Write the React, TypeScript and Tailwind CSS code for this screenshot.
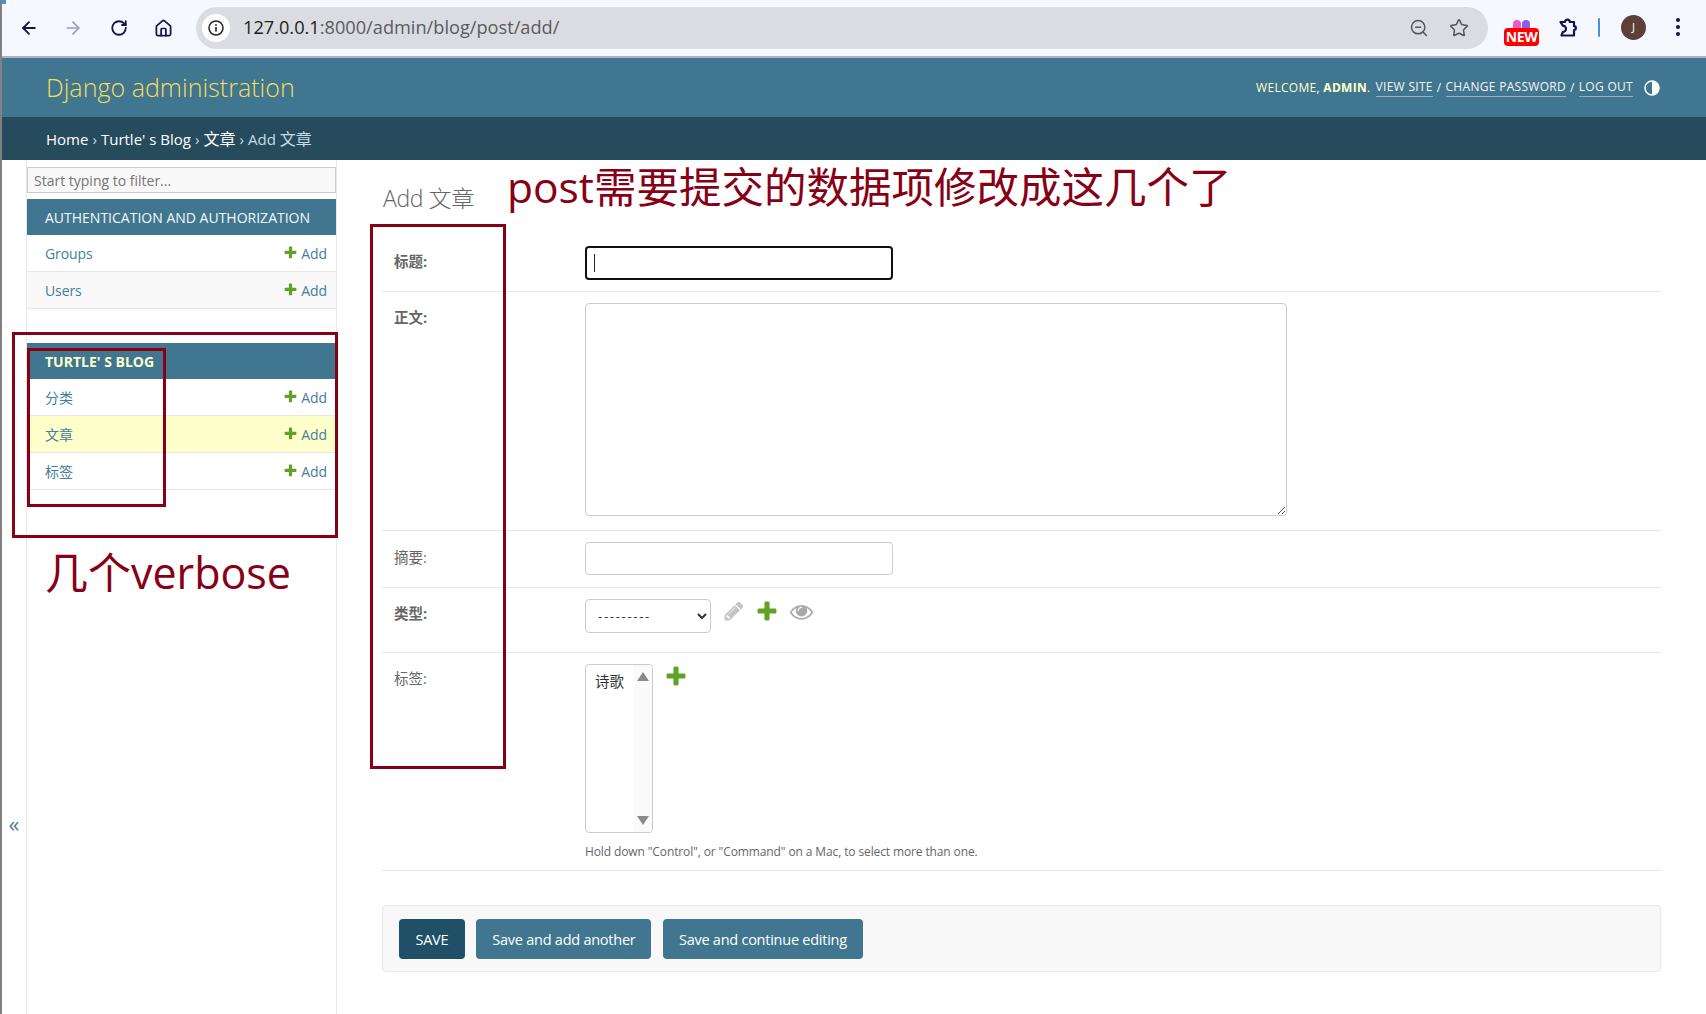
import React from "react";
import { ArrowLeft, ArrowRight, RotateCw, Home, ZoomOut, Star } from "lucide-react";

const FONT = "font-['Open_Sans','Noto_Sans_CJK_SC',sans-serif]";
const PLUS = "M1600 796v192q0 40-28 68t-68 28h-416v416q0 40-28 68t-68 28h-192q-40 0-68-28t-28-68v-416h-416q-40 0-68-28t-28-68v-192q0-40 28-68t68-28h416v-416q0-40 28-68t68-28h192q40 0 68 28t28 68v416h416q40 0 68 28t28 68z";
const PENCIL = "M491 1536l91-91-235-235-91 91v107h128v128h107zm523-928q0-22-22-22-10 0-17 7l-542 542q-7 7-7 17 0 22 22 22 10 0 17-7l542-542q7-7 7-17zm-54-192l416 416-832 832h-416v-416zm683 96q0 53-37 90l-166 166-416-416 166-165q36-38 90-38 53 0 91 38l235 234q37 39 37 91z";
const EYE = "M1664 960q-152-236-381-353 61 104 61 225 0 185-131.5 316.5t-316.5 131.5-316.5-131.5-131.5-316.5q0-121 61-225-229 117-381 353 133 205 333.5 326.5t434.5 121.5 434.5-121.5 333.5-326.5zm-720-384q0-20-14-34t-34-14q-125 0-214.5 89.5t-89.5 214.5q0 20 14 34t34 14 34-14 14-34q0-86 61-147t147-61q20 0 34-14t14-34zm848 384q0 34-20 69-140 230-376.5 368.5t-499.5 138.5-499.5-139-376.5-368q-20-35-20-69t20-69q140-229 376.5-368t499.5-139 499.5 139 376.5 368q20 35 20 69z";

function Fa({ d, size, color }: { d: string; size: number; color: string }) {
  return (
    <svg width={size} height={size} viewBox="0 0 1792 1792" className="shrink-0">
      <path d={d} fill={color} />
    </svg>
  );
}

function ModelRow({ name, tone }: { name: string; tone: string }) {
  return (
    <div className={`flex h-[37px] items-center justify-between border-b border-[#e8e8e8] pl-[18px] pr-[9px] pt-[1px] ${tone}`}>
      <span className="text-[14px] tracking-[-0.1px] text-[#447e9b]">{name}</span>
      <span className="flex items-center text-[14px] tracking-[-0.1px] text-[#447e9b]">
        <span className="-mt-[3px] mr-[3px]"><Fa d={PLUS} size={15} color="#5fa225" /></span>Add
      </span>
    </div>
  );
}

function Caption({ children, current }: { children: React.ReactNode; current?: boolean }) {
  return (
    <div className={`flex h-[36px] items-center bg-[#417690] pl-[18px] pt-[1px] text-[14px] uppercase ${current ? "font-bold text-[#ffffcc]" : "text-[#f7f7f7]"}`}>
      {children}
    </div>
  );
}

function Label({ children, bold, mt }: { children: React.ReactNode; bold?: boolean; mt: string }) {
  return <div className={`w-[203px] shrink-0 pl-[12px] text-[14.5px] leading-[20px] text-[#666] ${mt} ${bold ? "font-bold" : ""}`}>{children}</div>;
}

function Toolbar() {
  return (
    <div className="flex h-[58px] shrink-0 items-center border-b-2 border-[#aeaec4] bg-[#f6f8ff] text-[#17124f]">
      <div className="flex w-[194px] shrink-0 items-center">
        <ArrowLeft size={20} strokeWidth={2.2} className="ml-[17px]" />
        <ArrowRight size={20} strokeWidth={2} className="ml-[24px] text-[#9b9ab8]" />
        <RotateCw size={18} strokeWidth={2.4} className="ml-[27px]" />
        <Home size={19} strokeWidth={2.2} className="ml-[26px]" />
      </div>
      <div className="flex h-[42px] w-[1292px] shrink-0 items-center rounded-full bg-[#dbdce1] pl-[6px] pr-[19px]">
        <div className="flex h-[28px] w-[28px] items-center justify-center rounded-full bg-white">
          <svg width="16" height="16" viewBox="0 0 16 16"><circle cx="8" cy="8" r="7" fill="none" stroke="#222" strokeWidth="1.5" /><rect x="7.2" y="7" width="1.6" height="4.6" fill="#222" /><rect x="7.2" y="4.2" width="1.6" height="1.6" fill="#222" /></svg>
        </div>
        <span className="ml-[13px] text-[18.2px] text-[#222]">127.0.0.1<span className="text-[#5a5a5f]">:8000/admin/blog/post/add/</span></span>
        <div className="ml-auto flex items-center gap-[20px] text-[#55565b]">
          <ZoomOut size={20} strokeWidth={1.8} />
          <Star size={20} strokeWidth={1.8} />
        </div>
      </div>
      <div className="ml-[16px] mt-[9px] flex h-[27px] w-[35px] shrink-0 flex-col items-center">
        <div className="flex h-[9px] items-end gap-[1px]">
          <div className="h-[8px] w-[8px] rounded-t-[4px] bg-[#e85bc8]" />
          <div className="h-[8px] w-[8px] rounded-t-[4px] bg-[#8a5cf0]" />
        </div>
        <div className={`flex h-[18px] w-[35px] items-center justify-center rounded-[4px] bg-[#ff0000] text-[14px] leading-none font-bold tracking-[-0.4px] text-white ${FONT}`}>NEW</div>
      </div>
      <svg width="20" height="20" viewBox="0 0 20 20" className="ml-[19px] -mt-[3px] shrink-0" fill="none" stroke="#17124f" strokeWidth="2.2" strokeLinejoin="round">
        <path d="M2.5 5H7a2.4 2.4 0 0 1 4.8 0H16v4.2a1.9 1.9 0 0 1 0 3.8V18.5H3.5L4.8 15a3 3 0 0 0 0-6.4Z" />
      </svg>
      <div className="ml-[20px] h-[19px] w-[2px] -mt-[1px] rounded-full bg-[#4a90e2]" />
      <div className={`ml-[21px] -mt-[2px] flex h-[25px] w-[25px] items-center justify-center rounded-full bg-[#5d4037] text-[11px] text-white ${FONT}`}>J</div>
      <div className="ml-[30px] -mt-[2px] flex flex-col gap-[3px]">
        <div className="h-[4px] w-[4px] rounded-full bg-[#17124f]" />
        <div className="h-[4px] w-[4px] rounded-full bg-[#17124f]" />
        <div className="h-[4px] w-[4px] rounded-full bg-[#17124f]" />
      </div>
    </div>
  );
}

function Button({ children, dark }: { children: React.ReactNode; dark?: boolean }) {
  return (
    <div className={`flex h-[40px] items-center rounded-[4px] pt-[2px] text-[14.5px] tracking-[-0.25px] text-white ${dark ? "bg-[#205067] px-[16.5px]" : "bg-[#417690] px-[16px]"}`}>
      {children}
    </div>
  );
}

export default function App() {
  return (
    <div className={`relative flex h-[1014px] w-[1706px] flex-col overflow-hidden border-l-2 border-[#808080] bg-white ${FONT}`}>
      <Toolbar />
      <header className="flex h-[59px] shrink-0 items-center justify-between bg-[#417690] pl-[44px] pr-[46px]">
        <span className="text-[25px] font-light tracking-[0.03px] text-[#f5dd5d]">Django administration</span>
        <div className="flex items-center text-[12px] tracking-[0.3px] text-[#ffffcc] uppercase">
          <span>Welcome, <b className="font-bold">admin</b>.</span>
          <span className="ml-[5px] border-b border-[#8fb0c0] text-[#f5f5f5]">View site</span>
          <span className="mx-[4px] text-[#f5f5f5]">/</span>
          <span className="border-b border-[#8fb0c0] text-[#f5f5f5]">Change password</span>
          <span className="mx-[4px] text-[#f5f5f5]">/</span>
          <span className="border-b border-[#8fb0c0] text-[#f5f5f5]">Log out</span>
          <svg width="16" height="16" viewBox="0 0 16 16" className="ml-[11px]"><circle cx="8" cy="8" r="7" fill="#417690" stroke="#fff" strokeWidth="1.5" /><path d="M8 1a7 7 0 0 1 0 14z" fill="#fff" /></svg>
        </div>
      </header>
      <nav className="flex h-[43px] shrink-0 items-center bg-[#264b5d] pl-[44px] pt-[1px] text-[15px] text-white">
        Home<span className="mx-[4px] text-[#c4dce8]">›</span>Turtle' s Blog<span className="mx-[4px] text-[#c4dce8]">›</span><span className="text-[16px]">文章</span><span className="mx-[4px] text-[#c4dce8]">›</span><span className="text-[#c4dce8]">Add <span className="text-[16px]">文章</span></span>
      </nav>
      <div className="flex min-h-0 flex-1">
        <div className="flex w-[24px] shrink-0 items-end justify-center pb-[180px] text-[22px] leading-none text-[#447e9b]">
          <span>«</span>
        </div>
        <aside className="w-[311px] shrink-0 border-x border-[#e8e8e8] pt-[7px]">
          <div className="flex h-[26px] w-[309px] items-center border border-[#cccccc] bg-[#f8f8f8] pl-[6px] text-[14px] text-[#757575]">Start typing to filter...</div>
          <div className="mt-[6px]">
            <Caption>Authentication and Authorization</Caption>
            <ModelRow name="Groups" tone="bg-white" />
            <ModelRow name="Users" tone="bg-[#f8f8f8]" />
          </div>
          <div className="mt-[34px]">
            <Caption current>Turtle' s Blog</Caption>
            <ModelRow name="分类" tone="bg-white" />
            <ModelRow name="文章" tone="bg-[#ffffcc]" />
            <ModelRow name="标签" tone="bg-white" />
          </div>
        </aside>
        <main className="min-w-0 flex-1 pl-[45px] pr-[45px]">
          <h1 className="h-[76px] pl-[1px] pt-[21px] text-[23px] leading-[34px] font-light tracking-[-0.4px] text-[#666]">Add 文章</h1>
          <div className="flex h-[56px] items-start border-b border-[#e8e8e8] pt-[15px]">
            <Label bold mt="mt-[1px]">标题:</Label>
            <div className="-mt-[5px] flex h-[34px] w-[308px] items-center rounded-[4px] border-2 border-[#101010] pl-[7px]">
              <div className="h-[18px] w-px bg-[#222]" />
            </div>
          </div>
          <div className="flex h-[239px] items-start border-b border-[#e8e8e8] pt-[11px]">
            <Label bold mt="mt-[5px]">正文:</Label>
            <textarea readOnly className="h-[213px] w-[702px] rounded-[4px] border border-[#cccccc] bg-white" />
          </div>
          <div className="flex h-[57px] items-start border-b border-[#e8e8e8] pt-[11px]">
            <Label mt="mt-[6px]">摘要:</Label>
            <div className="h-[33px] w-[308px] rounded-[4px] border border-[#cccccc]" />
          </div>
          <div className="flex h-[65px] items-start border-b border-[#e8e8e8] pt-[11px]">
            <Label bold mt="mt-[5px]">类型:</Label>
            <select className="h-[34px] w-[126px] rounded-[4px] border border-[#cccccc] bg-white pl-[8px] text-[13px] tracking-[1.7px] text-[#333]">
              <option>---------</option>
            </select>
            <div className="flex items-center">
              <div className="ml-[12px]"><Fa d={PENCIL} size={22} color="#c4c4c4" /></div>
              <div className="ml-[10px]"><Fa d={PLUS} size={24} color="#5fa225" /></div>
              <div className="ml-[11px]"><Fa d={EYE} size={23} color="#a9a9a9" /></div>
            </div>
          </div>
          <div className="flex h-[218px] items-start border-b border-[#e8e8e8] pt-[11px]">
            <Label mt="mt-[5px]">标签:</Label>
            <div>
              <div className="flex items-start">
                <div className="flex h-[169px] w-[68px] overflow-hidden rounded-[4px] border border-[#cccccc]">
                  <div className="flex-1 pl-[9px] pt-[7px] text-[14.5px] leading-[20px] text-[#333]">诗歌</div>
                  <div className="flex w-[18px] flex-col items-center justify-between bg-[#fafafa] py-[7px]">
                    <div className="h-0 w-0 border-x-[6px] border-b-[9px] border-x-transparent border-b-[#8a8a8a]" />
                    <div className="h-0 w-0 border-x-[6px] border-t-[9px] border-x-transparent border-t-[#8a8a8a]" />
                  </div>
                </div>
                <div className="ml-[11px]"><Fa d={PLUS} size={24} color="#5fa225" /></div>
              </div>
              <p className="mt-[11px] text-[12px] leading-[16px] tracking-[-0.12px] text-[#666]">Hold down "Control", or "Command" on a Mac, to select more than one.</p>
            </div>
          </div>
          <div className="mt-[34px] flex h-[67px] items-center gap-[11.5px] rounded-[4px] border border-[#e8e8e8] bg-[#f8f8f8] pl-[16px]">
            <Button dark>SAVE</Button>
            <Button>Save and add another</Button>
            <Button>Save and continue editing</Button>
          </div>
        </main>
      </div>

      <div className="absolute left-0 top-0 h-[4px] w-[4px] bg-[#4a90e2]" />
      <div className="absolute left-[10px] top-[332px] h-[206px] w-[326px] border-[3px] border-[#880015]" />
      <div className="absolute left-[25px] top-[348px] h-[159px] w-[139px] border-[3px] border-[#880015]" />
      <div className="absolute left-[368px] top-[224px] h-[545px] w-[136px] border-[3px] border-[#880015]" />
      <div className="absolute left-[43px] top-[544px] text-[43px] leading-[58px] whitespace-nowrap text-[#880015]">几个verbose</div>
      <div className="absolute left-[505px] top-[158px] text-[42.5px] leading-[58px] whitespace-nowrap text-[#880015]">post需要提交的数据项修改成这几个了</div>
    </div>
  );
}
